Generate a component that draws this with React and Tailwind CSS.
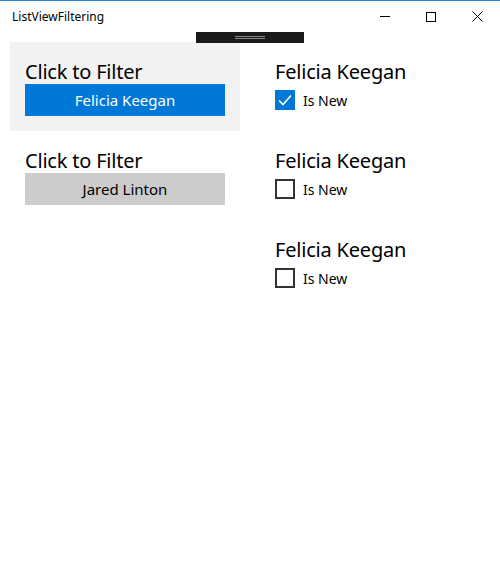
import React from "react";

const font = { fontFamily: '"Noto Sans", "Open Sans", sans-serif' };

function LeftItem({ name, selected }) {
  return (
    <div className={`flex flex-col px-[15px] pt-[17px] pb-[15px] ${selected ? "bg-[#f2f2f2]" : ""}`}>
      <div className="text-[20px] leading-[25px] text-black tracking-[-0.2px]">Click to Filter</div>
      <div
        className={`h-[32px] w-[200px] flex items-center justify-center text-[15px] ${
          selected ? "bg-[#0078d7] text-white" : "bg-[#cccccc] text-black"
        }`}
      >
        {name}
      </div>
    </div>
  );
}

function RightItem({ checked }) {
  return (
    <div className="flex flex-col h-[89px] pt-[17px]">
      <div className="text-[20px] leading-[25px] text-black tracking-[-0.2px]">Felicia Keegan</div>
      <div className="flex items-center mt-[6px] h-[20px]">
        {checked ? (
          <div className="w-[20px] h-[20px] bg-[#0078d7] flex items-center justify-center">
            <svg width="16" height="16" viewBox="0 0 16 16">
              <path d="M2 8.5 L6 12.5 L14 3.5" fill="none" stroke="white" strokeWidth="1.6" />
            </svg>
          </div>
        ) : (
          <div className="w-[20px] h-[20px] border-2 border-[#333333]" />
        )}
        <span className="ml-[8px] text-[14px] text-black">Is New</span>
      </div>
    </div>
  );
}

export default function App() {
  return (
    <div className="w-[500px] h-[576px] bg-white relative overflow-hidden" style={font}>
      <div className="h-[1px] bg-[#2b88d8]" />
      <div className="h-[31px] flex items-center">
        <div className="pl-[12px] text-[12px] text-black flex-1">ListViewFiltering</div>
        <div className="flex h-full">
          <div className="w-[46px] flex items-center justify-center">
            <div className="w-[10px] h-[1px] bg-black" />
          </div>
          <div className="w-[46px] flex items-center justify-center">
            <div className="w-[10px] h-[10px] border border-black" />
          </div>
          <div className="w-[46px] flex items-center justify-center">
            <svg width="11" height="11" viewBox="0 0 11 11">
              <path d="M0.5 0.5 L10.5 10.5 M10.5 0.5 L0.5 10.5" stroke="black" strokeWidth="1" />
            </svg>
          </div>
        </div>
      </div>
      <div className="absolute left-[196px] top-[32px] w-[108px] h-[11px] bg-[#1a1a1a] flex flex-col items-center justify-center gap-[1px]">
        <div className="w-[30px] h-[1px] bg-[#888888]" />
        <div className="w-[30px] h-[1px] bg-[#888888]" />
      </div>
      <div className="flex pt-[10px]">
        <div className="ml-[10px] w-[230px] flex flex-col">
          <LeftItem name="Felicia Keegan" selected />
          <LeftItem name="Jared Linton" />
        </div>
        <div className="ml-[35px] flex flex-col">
          <RightItem checked />
          <RightItem />
          <RightItem />
        </div>
      </div>
    </div>
  );
}
